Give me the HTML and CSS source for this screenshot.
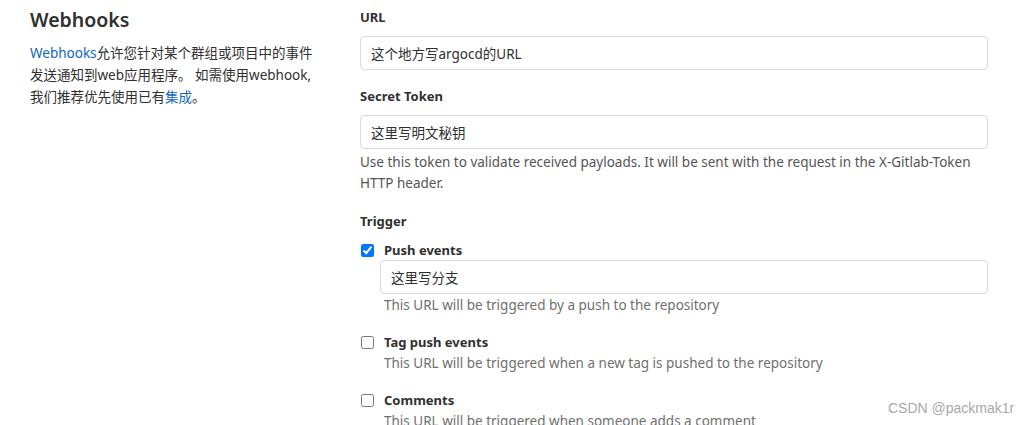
FILE: index.html
```html
<!DOCTYPE html>
<html lang="zh-CN">
<head>
<meta charset="utf-8">
<title>Webhooks</title>
<link rel="stylesheet" href="styles.css">
</head>
<body>
<div class="page">
  <aside class="intro">
    <h4 class="intro-title">Webhooks</h4>
    <p class="intro-text"><a class="link" href="#">Webhooks</a>允许您针对某个群组或项目中的事件发送通知到web应用程序。 如需使用webhook, 我们推荐优先使用已有<a class="link" href="#">集成</a>。</p>
  </aside>
  <main class="form">
    <div class="group">
      <label class="label">URL</label>
      <div class="input">这个地方写argocd的URL</div>
    </div>
    <div class="group group-token">
      <label class="label">Secret Token</label>
      <div class="input">这里写明文秘钥</div>
      <p class="help help-block">Use this token to validate received payloads. It will be sent with the request in the X-Gitlab-Token HTTP header.</p>
    </div>
    <div class="group">
      <label class="label">Trigger</label>
      <div class="trigger">
        <label class="check-row"><input type="checkbox" class="check" checked><span class="check-label">Push events</span></label>
        <div class="trigger-body">
          <div class="input">这里写分支</div>
          <p class="help help-tight">This URL will be triggered by a push to the repository</p>
        </div>
      </div>
      <div class="trigger">
        <label class="check-row"><input type="checkbox" class="check"><span class="check-label">Tag push events</span></label>
        <div class="trigger-body">
          <p class="help help-tight">This URL will be triggered when a new tag is pushed to the repository</p>
        </div>
      </div>
      <div class="trigger">
        <label class="check-row"><input type="checkbox" class="check"><span class="check-label">Comments</span></label>
        <div class="trigger-body">
          <p class="help help-tight">This URL will be triggered when someone adds a comment</p>
        </div>
      </div>
    </div>
  </main>
</div>
<div class="watermark">CSDN @packmak1r</div>
</body>
</html>
```
FILE: styles.css
```css
html, body {
  margin: 0;
  padding: 0;
  background: #fff;
  overflow: hidden;
}
body {
  font-family: "Noto Sans", "Noto Sans CJK SC", sans-serif;
  font-size: 13px;
  color: #303030;
}
.page {
  display: flex;
  padding: 7px 0 0 30px;
}
.intro {
  width: 292px;
  flex: none;
}
.intro-title {
  margin: 0;
  font-size: 19.5px;
  font-weight: 600;
  line-height: 26px;
  color: #303030;
}
.intro-text {
  margin: 9px 0 0;
  font-size: 13.5px;
  line-height: 22px;
}
.link {
  color: #1068bf;
  text-decoration: none;
}
.form {
  margin-left: 38px;
  width: 628px;
  flex: none;
}
.group {
  margin-bottom: 16px;
}
.group-token {
  margin-bottom: 17px;
}
.label {
  display: block;
  font-weight: 700;
  line-height: 20px;
  margin-bottom: 9px;
}
.input {
  box-sizing: border-box;
  height: 34px;
  border: 1px solid #dcdcdc;
  border-radius: 4px;
  padding: 0 10px;
  display: flex;
  align-items: center;
  font-size: 13.5px;
}
.help {
  margin: 0;
  color: #707070;
  line-height: 20px;
  font-size: 13.5px;
}
.help-block {
  margin-top: 3px;
  line-height: 21px;
  color: #555;
}
.help-tight {
  margin-top: 1px;
}
.trigger {
  margin-bottom: 17px;
}
.check-row {
  display: flex;
  align-items: center;
  height: 20px;
}
.check {
  margin: 0 10px 0 1px;
  width: 13px;
  height: 13px;
}
.check-label {
  font-weight: 700;
}
.trigger-body {
  padding-left: 20px;
}
.trigger-body .help {
  padding-left: 4px;
}
.watermark {
  position: absolute;
  left: 888px;
  top: 400px;
  font-family: "Liberation Sans", sans-serif;
  font-size: 14px;
  color: #a8a8a8;
}
```
